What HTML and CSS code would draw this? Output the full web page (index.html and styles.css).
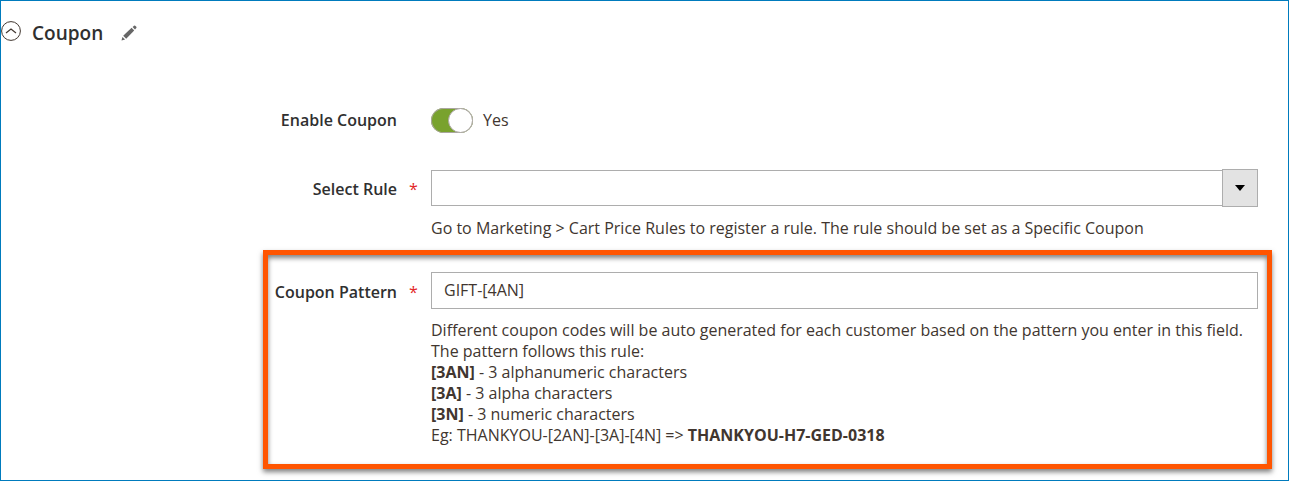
FILE: index.html
```html
<!DOCTYPE html>
<html lang="en">
<head>
    <meta charset="UTF-8">
    <meta name="viewport" content="width=device-width, initial-scale=1.0">
    <title>Coupon</title>
    <link rel="stylesheet" href="styles.css">
</head>
<body>
    <form class="section">
        <div class="section-header">
            <button type="button" class="icon-button collapse" aria-label="Collapse">
                <svg width="20" height="20" viewBox="0 0 20 20" fill="none" stroke="#41362f">
                    <circle cx="10" cy="10" r="9.4"/>
                    <path d="M5 12 L10 8 L15 12" stroke-width="1.2"/>
                </svg>
            </button>
            <h2>Coupon</h2>
            <button type="button" class="icon-button" aria-label="Edit">
                <svg width="16" height="16" viewBox="0 0 16 16" fill="#666">
                    <path d="M0.5 15.5 L1.4 11.9 L4.1 14.6 Z"/>
                    <path d="M2.2 10.8 L10.6 2.8 L13.2 5.4 L5.2 13.8 Z"/>
                    <path d="M11.6 2 L13 0.7 Q13.6 0.2 14.2 0.7 L15.3 1.8 Q15.8 2.4 15.3 3 L14 4.4 Z"/>
                </svg>
            </button>
        </div>

        <div class="field">
            <label class="field-label" for="enable-coupon">Enable Coupon</label>
            <div class="field-control switch-row">
                <input type="checkbox" id="enable-coupon" class="switch" checked>
                <span>Yes</span>
            </div>
        </div>

        <div class="field field-rule">
            <label class="field-label required" for="select-rule">Select Rule</label>
            <div class="field-control">
                <div class="select-wrap">
                    <select id="select-rule" class="select" required>
                        <option value="" selected></option>
                    </select>
                    <span class="select-arrow"></span>
                </div>
                <div class="note">Go to Marketing &gt; Cart Price Rules to register a rule. The rule should be set as a Specific Coupon</div>
            </div>
        </div>

        <div class="field highlight">
            <label class="field-label required" for="coupon-pattern">Coupon Pattern</label>
            <div class="field-control">
                <input type="text" id="coupon-pattern" class="input" value="GIFT-[4AN]" required>
                <div class="note">
                    Different coupon codes will be auto generated for each customer based on the pattern you enter in this field.<br>
                    The pattern follows this rule:<br>
                    <strong>[3AN]</strong> - 3 alphanumeric characters<br>
                    <strong>[3A]</strong> - 3 alpha characters<br>
                    <strong>[3N]</strong> - 3 numeric characters<br>
                    Eg: THANKYOU-[2AN]-[3A]-[4N] =&gt; <strong>THANKYOU-H7-GED-0318</strong>
                </div>
            </div>
        </div>
    </form>
</body>
</html>
```

FILE: styles.css
```css
*,
*::before {
    box-sizing: border-box;
}

body {
    margin: 0;
    background-color: #fff;
    color: #41362f;
    font-family: "Open Sans", "Noto Sans", sans-serif;
    font-size: 16px;
    line-height: 21px;
}

.section {
    border: 1px solid #007bbd;
    padding: 20px 16px 11px 0;
}

.section-header {
    display: flex;
    align-items: center;
    height: 24px;
    margin-bottom: 63px;
}

.section-header h2 {
    margin: 0 18px 0 11px;
    color: #303030;
    font-size: 19px;
    line-height: 24px;
    font-weight: 600;
}

.icon-button {
    display: flex;
    padding: 0;
    border: none;
    background: none;
    cursor: pointer;
}

.collapse {
    align-self: flex-start;
}

/* rows */
.field {
    display: grid;
    grid-template-columns: 129px 1fr;
    column-gap: 34px;
    margin-left: 262px;
    padding: 0 14px 0 5px;
}

.field-label {
    position: relative;
    color: #303030;
    font-weight: 600;
    line-height: 25px;
    text-align: right;
    white-space: nowrap;
}

.required {
    line-height: 41px;
}

.required::after {
    content: "*";
    position: absolute;
    left: 100%;
    margin-left: 12px;
    color: #e22626;
    font-weight: 400;
}

.switch-row {
    display: flex;
    align-items: center;
    gap: 10px;
}

.switch {
    appearance: none;
    display: flex;
    justify-content: flex-end;
    width: 42px;
    height: 25px;
    margin: 0;
    border-radius: 13px;
    box-shadow: inset 0 0 0 1px #aaa6a0;
    background-color: #79a22e;
    cursor: pointer;
}

.switch::before {
    content: "";
    flex: none;
    width: 25px;
    height: 25px;
    border: 1px solid #aaa6a0;
    border-radius: 50%;
    background-color: #fff;
}

.switch:not(:checked) {
    justify-content: flex-start;
    background-color: #fff;
}

.field-rule {
    margin-top: 36px;
    margin-bottom: 11px;
}

.select-wrap {
    display: grid;
    grid-template-columns: 1fr 36px;
    align-items: center;
}

.select {
    appearance: none;
    grid-area: 1 / 1 / 2 / 3;
    width: 100%;
    height: 36px;
    border: 1px solid #adadad;
    border-radius: 0;
    background-color: #fff;
    padding: 0 48px 0 12px;
    font: inherit;
    color: inherit;
}

.select-arrow {
    grid-area: 1 / 2;
    z-index: 1;
    display: flex;
    align-items: center;
    justify-content: center;
    height: 38px;
    border: 1px solid #adadad;
    background-color: #e3e3e3;
    pointer-events: none;
}

.select-arrow::before {
    content: "";
    border: 5px solid transparent;
    border-top: 6px solid #000;
    border-bottom: none;
}

.input {
    display: block;
    width: 100%;
    height: 37px;
    border: 1px solid #adadad;
    border-radius: 0;
    padding: 0 12px 2px;
    font: inherit;
    color: inherit;
}

.note {
    margin-top: 11px;
}

/* orange frame round the pattern field */
.highlight {
    padding: 17px 9px 18px 0;
    border: 5px solid #ff5501;
    box-shadow: 0 3px 5px rgba(0, 0, 0, 0.5), inset 0 3px 5px rgba(0, 0, 0, 0.5);
}
```
